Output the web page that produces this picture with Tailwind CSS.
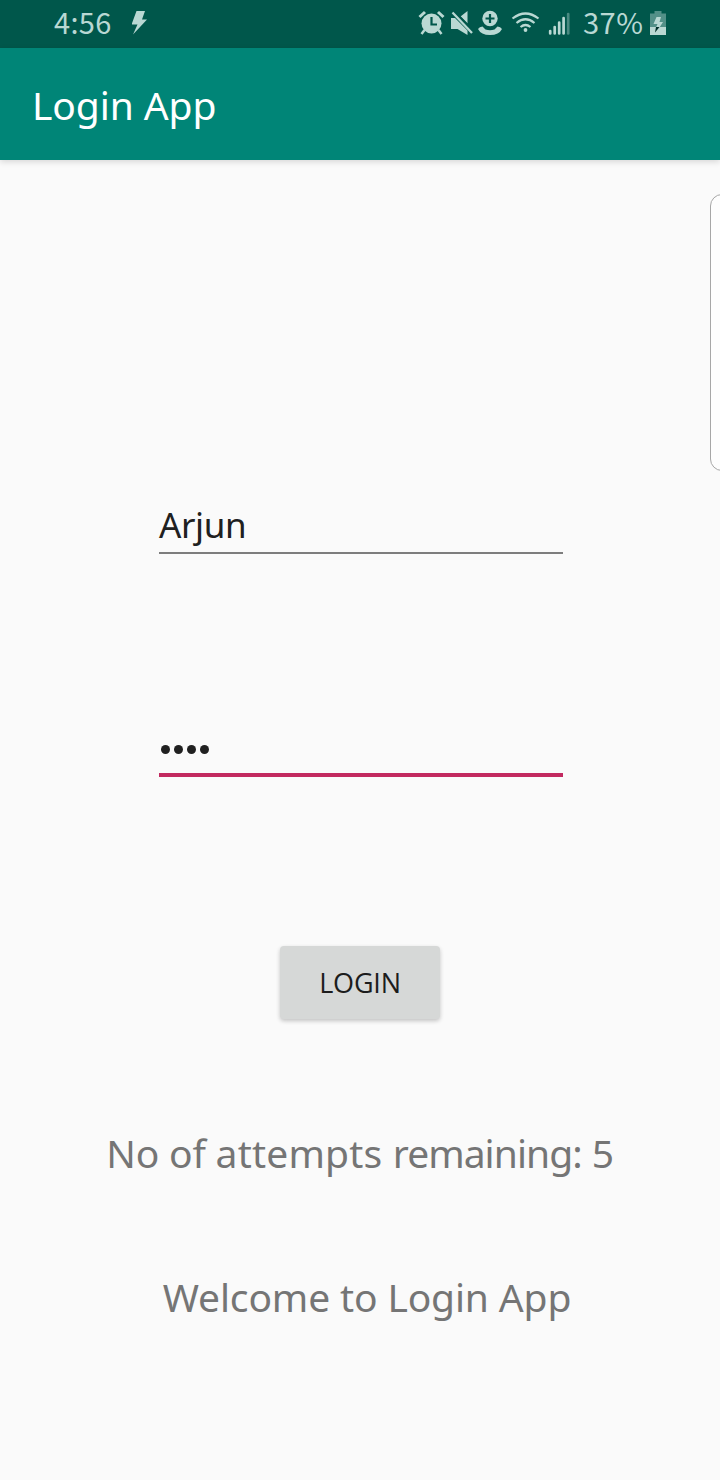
<!DOCTYPE html>
<html lang="en">
<head>
<meta charset="utf-8">
<title>Login App</title>
<script src="https://cdn.jsdelivr.net/npm/@tailwindcss/browser@4"></script>
</head>
<body class="bg-[#fafafa]">
<div class="relative w-[720px] h-[1480px] overflow-hidden bg-[#fafafa] font-['Noto_Sans',sans-serif] flex flex-col">
  <div class="h-12 shrink-0 bg-[#00574b] text-[#b9d8d3] flex items-start pl-[54px] font-['Noto_Sans_CJK_SC',sans-serif] text-[29px] leading-[43px] whitespace-nowrap">
    <span class="w-[78px] tracking-[0.3px]">4:56</span>
    <svg class="w-4 h-12 shrink-0" viewBox="132 0 16 48" fill="currentColor"><path d="M136.500 11H145L142 19.500H147L133 34.500L137.500 24.500H131.500Z"/></svg>
    <svg class="w-[162px] h-12 shrink-0 ml-[270px] mr-[3px]" viewBox="418 0 162 48">
      <g fill="none" stroke="currentColor">
        <circle cx="431.500" cy="23.500" r="10" fill="currentColor" stroke="none"/>
        <path stroke-width="2.500" d="M424.500 30L421.500 34M438.500 30L441.500 34"/>
        <path stroke-width="3" d="M419.500 17L425 12M438 12L443.500 17"/>
        <path stroke="#00574b" stroke-width="2.200" d="M431.500 17V24.500H437"/>
        <path fill="currentColor" stroke="none" d="M451 18H455L467.500 30.500V35L457.500 29H451ZM460.500 16.500L467.500 11V23.500Z"/>
        <path stroke="#00574b" stroke-width="1.500" d="M455 11.500L473 30"/>
        <path stroke-width="2.300" d="M452.500 12.500L472 33"/>
        <circle cx="490" cy="18.500" r="7.700" fill="currentColor" stroke="none"/>
        <path stroke="#00574b" stroke-width="2.200" d="M490 14V23M485.500 18.500H494.500"/>
        <path fill="currentColor" stroke="none" d="M478 29Q479.500 26.500 482.500 26.500L485.500 29.500Q490 31 494.500 29.500L497.500 26.500Q500.500 26.500 502 29Q499 35 490 35Q481 35 478 29Z"/>
        <g stroke-width="2.200"><path d="M512.500 18.500Q525.500 8.500 538.500 18.500M516.500 23Q525.500 15.500 534.500 23M520.500 27Q525.500 23 530.500 27"/></g>
        <circle cx="525.500" cy="30" r="1.900" fill="currentColor" stroke="none"/>
        <g stroke-width="2.700" stroke-linecap="round"><path d="M550.200 31V33.500M554.700 27V33.500M559.200 22.500V33.500M563.600 18V33.500"/><path opacity=".4" d="M568.200 14V33.500"/></g>
      </g>
    </svg>
    <span class="w-[67px] tracking-[0.5px]">37%</span>
    <svg class="w-4 h-12 shrink-0" viewBox="650 0 16 48" fill="currentColor"><path opacity=".45" d="M654.500 11H661.500V13.500H666V27H650V13.500H654.500Z"/><path d="M650 27H666V35H650Z"/><path d="M656.500 17H661L659.500 22H663L659.500 27.500H656L657.500 24H653.500Z"/><path fill="#002f29" d="M656 27H659.500L655 32.500Z"/></svg>
  </div>
  <header class="h-28 shrink-0 bg-[#008577] shadow-[0_2px_6px_rgba(0,0,0,0.14)] pl-8 pt-[33px]">
    <h1 class="text-white text-[39px] leading-[48px] tracking-[-0.1px]">Login App</h1>
  </header>
  <main class="flex flex-col items-center pt-[333px] shrink-0">
    <div class="w-[404px] h-[61px] ml-[2px] border-b-2 border-[#7d7d7d] text-[#202020] text-[35px] leading-[64px] tracking-[-0.4px]">Arjun</div>
    <div class="w-[404px] h-[64px] ml-[2px] mt-[159px] border-b-4 border-[#c2295f] pl-[2px] pt-[32px] flex gap-1">
      <i class="size-[9px] rounded-full bg-[#202020]"></i><i class="size-[9px] rounded-full bg-[#202020]"></i><i class="size-[9px] rounded-full bg-[#202020]"></i><i class="size-[9px] rounded-full bg-[#202020]"></i>
    </div>
    <button class="mt-[169px] w-40 h-[73px] rounded bg-[#d6d8d7] shadow-[0_2px_4px_rgba(0,0,0,0.22)] text-[#1c1c1c] font-['Open_Sans',sans-serif] text-[27px] leading-[74px] tracking-[-0.2px]">LOGIN</button>
    <p class="mt-[106px] text-[39px] leading-[56px] text-[#757575] tracking-[-0.2px] whitespace-nowrap">No of <span class="tracking-[0.2px]">attempts </span><span class="tracking-[-0.95px]">remaining:</span> 5</p>
    <p class="mt-[88px] text-[39px] leading-[56px] text-[#757575] tracking-[-0.15px] pl-[14px] whitespace-nowrap">Welcome to Login App</p>
  </main>
  <div class="absolute left-[710px] top-[194px] w-10 h-[277px] rounded-xl border border-[#a6a6a6] bg-[#fdfdfd]"></div>
</div>
</body>
</html>
